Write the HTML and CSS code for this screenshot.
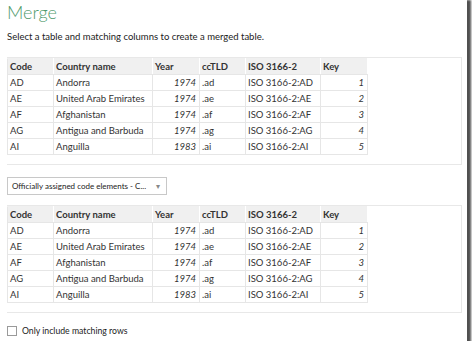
FILE: index.html
```html
<!DOCTYPE html>
<html>
<head>
<meta charset="utf-8">
<link rel="stylesheet" href="styles.css">
</head>
<body>
<div class="frame">
  <h1 class="title">Merge</h1>
  <p class="subtitle">Select a table and matching columns to create a merged table.</p>

  <div class="panel">
    <table class="grid">
      <colgroup>
        <col class="c-code"><col class="c-name"><col class="c-year"><col class="c-tld"><col class="c-iso"><col class="c-key">
      </colgroup>
      <thead>
        <tr><th>Code</th><th>Country name</th><th>Year</th><th>ccTLD</th><th>ISO 3166-2</th><th>Key</th></tr>
      </thead>
      <tbody>
        <tr><td>AD</td><td>Andorra</td><td class="num">1974</td><td>.ad</td><td>ISO 3166-2:AD</td><td class="num">1</td></tr>
        <tr><td>AE</td><td>United Arab Emirates</td><td class="num">1974</td><td>.ae</td><td>ISO 3166-2:AE</td><td class="num">2</td></tr>
        <tr><td>AF</td><td>Afghanistan</td><td class="num">1974</td><td>.af</td><td>ISO 3166-2:AF</td><td class="num">3</td></tr>
        <tr><td>AG</td><td>Antigua and Barbuda</td><td class="num">1974</td><td>.ag</td><td>ISO 3166-2:AG</td><td class="num">4</td></tr>
        <tr><td>AI</td><td>Anguilla</td><td class="num">1983</td><td>.ai</td><td>ISO 3166-2:AI</td><td class="num">5</td></tr>
      </tbody>
    </table>
  </div>

  <div class="select">
    <span class="select-text">Officially assigned code elements - C...</span>
    <span class="select-arrow">&#9662;</span>
  </div>

  <div class="panel">
    <table class="grid">
      <colgroup>
        <col class="c-code"><col class="c-name"><col class="c-year"><col class="c-tld"><col class="c-iso"><col class="c-key">
      </colgroup>
      <thead>
        <tr><th>Code</th><th>Country name</th><th>Year</th><th>ccTLD</th><th>ISO 3166-2</th><th>Key</th></tr>
      </thead>
      <tbody>
        <tr><td>AD</td><td>Andorra</td><td class="num">1974</td><td>.ad</td><td>ISO 3166-2:AD</td><td class="num">1</td></tr>
        <tr><td>AE</td><td>United Arab Emirates</td><td class="num">1974</td><td>.ae</td><td>ISO 3166-2:AE</td><td class="num">2</td></tr>
        <tr><td>AF</td><td>Afghanistan</td><td class="num">1974</td><td>.af</td><td>ISO 3166-2:AF</td><td class="num">3</td></tr>
        <tr><td>AG</td><td>Antigua and Barbuda</td><td class="num">1974</td><td>.ag</td><td>ISO 3166-2:AG</td><td class="num">4</td></tr>
        <tr><td>AI</td><td>Anguilla</td><td class="num">1983</td><td>.ai</td><td>ISO 3166-2:AI</td><td class="num">5</td></tr>
      </tbody>
    </table>
  </div>

  <label class="check">
    <span class="box"></span>
    <span class="check-label">Only include matching rows</span>
  </label>
</div>
</body>
</html>
```

FILE: styles.css
```css
html, body {
  margin: 0;
  padding: 0;
  background: #ffffff;
}

.frame {
  box-sizing: border-box;
  width: 467px;
  height: 341px;
  padding: 0 5px 0 7px;
  background: #ffffff;
  box-shadow: 2px 2px 2px 2px #505050;
  font-family: Lato, "Open Sans", sans-serif;
  color: #333333;
  overflow: hidden;
}

.title {
  margin: 0;
  height: 24px;
  font-size: 18px;
  line-height: 24px;
  font-weight: 300;
  color: #4f9a6c;
}

.subtitle {
  margin: 6px 0 0 0;
  font-size: 9.5px;
  line-height: 14px;
  color: #222222;
}

.panel {
  box-sizing: border-box;
  height: 108px;
  margin-top: 13px;
  border: 1px solid #e8e8e8;
  border-left: none;
}

.grid {
  border-collapse: collapse;
  table-layout: fixed;
  font-size: 9.5px;
  color: #333333;
}

.c-code { width: 46px; }
.c-name { width: 99px; }
.c-year { width: 47px; }
.c-tld { width: 46px; }
.c-iso { width: 75px; }
.c-key { width: 47px; }

.grid th,
.grid td {
  height: 15px;
  padding: 0 2px;
  text-align: left;
  white-space: nowrap;
  overflow: hidden;
  border: 1px solid #e6e6e6;
}

.grid th {
  background: #f0f0f0;
  font-weight: 700;
  color: #333333;
  border-color: #f0f0f0 #ffffff #e6e6e6 #ffffff;
}

.grid th:first-child {
  border-left-color: #e6e6e6;
}

.grid td.num {
  text-align: right;
  font-style: italic;
  padding-right: 3px;
}

.select {
  box-sizing: border-box;
  display: flex;
  align-items: center;
  justify-content: space-between;
  width: 160px;
  height: 18px;
  margin-top: 12px;
  padding: 0 6px 0 4px;
  border: 1px solid #c8c8c8;
  font-size: 8px;
  white-space: nowrap;
  color: #222222;
}

.select-arrow {
  font-size: 8px;
  color: #888888;
}

.select + .panel {
  margin-top: 10px;
}

.check {
  display: flex;
  align-items: center;
  gap: 5px;
  margin-top: 12px;
  font-size: 8.7px;
  color: #222222;
}

.box {
  box-sizing: border-box;
  width: 10px;
  height: 10px;
  border: 1px solid #9a9a9a;
  background: #ffffff;
}
```
